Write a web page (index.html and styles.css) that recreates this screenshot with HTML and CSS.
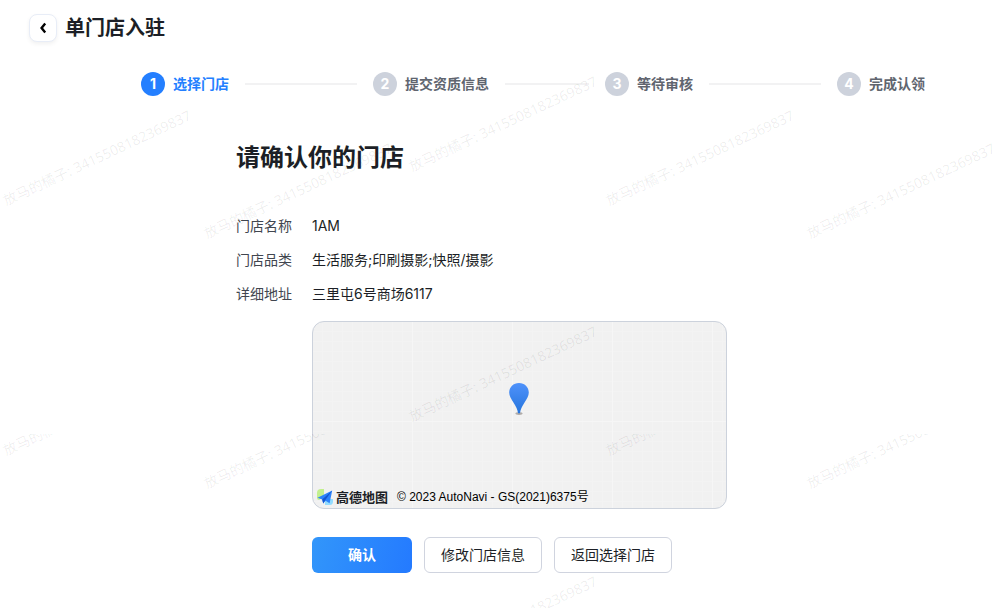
FILE: index.html
```html
<!DOCTYPE html>
<html lang="zh-CN">
<head>
<meta charset="utf-8">
<meta name="viewport" content="width=device-width, initial-scale=1">
<title>单门店入驻</title>
<link rel="stylesheet" href="styles.css">
</head>
<body>
<header class="header">
  <button class="back" type="button" aria-label="返回">
    <svg width="14" height="14" viewBox="0 0 14 14"><path d="M9.200 2.600 5.600 7l3.600 4.400" fill="none" stroke="#000" stroke-width="2.400"/></svg>
  </button>
  <h1 class="title">单门店入驻</h1>
</header>

<ol class="steps">
  <li class="step step-active"><span class="step-num">1</span><span class="step-name">选择门店</span></li>
  <li class="step"><span class="step-num">2</span><span class="step-name">提交资质信息</span></li>
  <li class="step"><span class="step-num">3</span><span class="step-name">等待审核</span></li>
  <li class="step"><span class="step-num">4</span><span class="step-name">完成认领</span></li>
</ol>

<main class="content">
  <h2 class="heading">请确认你的门店</h2>
  <dl class="info">
    <dt>门店名称</dt><dd>1AM</dd>
    <dt>门店品类</dt><dd>生活服务;印刷摄影;快照/摄影</dd>
    <dt>详细地址</dt><dd>三里屯6号商场6117</dd>
  </dl>
  <div class="detail">
    <div class="map">
      <svg class="pin" width="22" height="34" viewBox="0 0 22 34">
        <defs><linearGradient id="pin-fill" x1="0" y1="0" x2="0" y2="1"><stop offset="0" stop-color="#4f92fb"/><stop offset="1" stop-color="#2675dd"/></linearGradient></defs>
        <ellipse cx="10" cy="31.6" rx="3.6" ry="1.4" fill="#8d8581" opacity=".65"/>
        <path d="M10 1C4.400 1 .2 5.200.2 10.600c0 3.600 2 6.400 4.400 10.200C7 24.600 8.600 27.400 9 31.200h2c.4-3.800 2-6.600 4.400-10.400 2.400-3.800 4.400-6.600 4.400-10.200C19.800 5.200 15.600 1 10 1z" fill="url(#pin-fill)"/>
      </svg>
      <div class="credit">
        <svg class="credit-logo" width="18" height="18" viewBox="0 0 18 18">
          <path d="M1 5a4 4 0 0 1 4-4h3v8L3 12a2 2 0 0 1-2-2z" fill="#c3f08e"/>
          <path d="M9 11h8v2.500a3.500 3.500 0 0 1-3.500 3.500H9z" fill="#93dcff"/>
          <path d="M1.500 9.800 16.200 2.500 13.600 15.200 9.500 12.800 7.200 15.600 6.200 11.400z" fill="#2c83fb"/>
          <path d="M16.200 2.500 6.200 11.400 7.200 15.600 9 12.400z" fill="#1556d0"/>
        </svg>
        <span class="credit-brand">高德地图</span>
        <span class="credit-text">© 2023 AutoNavi - GS(2021)6375号</span>
      </div>
    </div>
    <div class="actions">
      <button class="btn btn-primary" type="button">确认</button>
      <button class="btn" type="button">修改门店信息</button>
      <button class="btn" type="button">返回选择门店</button>
    </div>
  </div>
</main>

<svg class="watermark" aria-hidden="true">
  <defs>
    <clipPath id="lower"><rect x="0" y="434" width="100%" height="100%"/></clipPath>
  </defs>
  <g>
    <text transform="translate(6 206) rotate(-25)">放马的橘子: 3415508182369837</text>
    <text transform="translate(207 239) rotate(-25)">放马的橘子: 3415508182369837</text>
    <text transform="translate(412 172) rotate(-25)">放马的橘子: 3415508182369837</text>
    <text transform="translate(609 206) rotate(-25)">放马的橘子: 3415508182369837</text>
    <text transform="translate(810 239) rotate(-25)">放马的橘子: 3415508182369837</text>
    <text transform="translate(412 422) rotate(-25)">放马的橘子: 3415508182369837</text>
    <text transform="translate(412 672) rotate(-25)">放马的橘子: 3415508182369837</text>
  </g>
  <g clip-path="url(#lower)">
    <text transform="translate(6 456) rotate(-25)">放马的橘子: 3415508182369837</text>
    <text transform="translate(207 489) rotate(-25)">放马的橘子: 3415508182369837</text>
    <text transform="translate(609 456) rotate(-25)">放马的橘子: 3415508182369837</text>
    <text transform="translate(810 489) rotate(-25)">放马的橘子: 3415508182369837</text>
  </g>
</svg>
</body>
</html>
```
FILE: styles.css
```css
* {
  box-sizing: border-box;
}

body {
  position: relative;
  min-height: 100vh;
  margin: 0;
  background: #fff;
  color: #1c1f26;
  font: 14px/22px Inter, "Noto Sans CJK SC", sans-serif;
}

h1, h2, ol, dl, dd {
  margin: 0;
  padding: 0;
}

.header {
  display: flex;
  align-items: center;
  gap: 8px;
  padding: 14px 29px 0;
}

.back {
  display: flex;
  align-items: center;
  justify-content: center;
  width: 28px;
  height: 28px;
  padding: 0;
  border: 1px solid #e8edf7;
  border-radius: 8px;
  background: #fff;
  box-shadow: 0 2px 4px rgba(0, 0, 0, 0.06);
}

.title {
  font-size: 20px;
  line-height: 28px;
  font-weight: 600;
}

.steps {
  display: flex;
  margin-top: 30px;
  padding: 0 80px 0 141px;
  list-style: none;
}

.step {
  display: flex;
  flex: 1;
  align-items: center;
  gap: 8px;
  color: #60656f;
  font-weight: 600;
  line-height: 24px;
  white-space: nowrap;
}

.step:last-child {
  flex: none;
}

.step:not(:last-child)::after {
  content: "";
  flex: 1;
  height: 2px;
  margin: 0 16px 0 8px;
  background: #f2f2f3;
}

.step-num {
  width: 24px;
  height: 24px;
  border-radius: 50%;
  background: #cdd2dc;
  color: #fff;
  font-weight: 700;
  text-align: center;
}

.step-active {
  color: #247fff;
}

.step-active .step-num {
  background: #247fff;
}

.content {
  padding: 46px 278px 36px 236px;
}

.heading {
  font-size: 24px;
  line-height: 32px;
  font-weight: 600;
}

.info {
  display: grid;
  grid-template-columns: 56px 1fr;
  gap: 12px 20px;
  margin-top: 41px;
}

.info dt {
  color: #41464f;
}

.detail {
  margin: 16px 0 0 76px;
}

.map {
  display: flex;
  flex-direction: column;
  height: 188px;
  border: 1px solid #ccd2dc;
  border-radius: 12px;
  background-color: #f1f1f1;
  background-image:
    linear-gradient(to right, #f6f6f6 1px, transparent 1px),
    linear-gradient(to bottom, #f6f6f6 1px, transparent 1px),
    linear-gradient(to right, #f3f3f3 1px, transparent 1px),
    linear-gradient(to bottom, #f3f3f3 1px, transparent 1px);
  background-size: 100px 100px, 100px 100px, 10px 10px, 10px 10px;
  background-position: -1px -1px;
}

.pin {
  margin: 60px auto 0;
}

.credit {
  display: flex;
  align-items: center;
  margin-top: auto;
  padding: 0 0 2px 3px;
  line-height: 18px;
}

.credit-brand {
  margin-left: 2px;
  font: 700 13px/18px "Noto Sans CJK SC", sans-serif;
}

.credit-text {
  margin-left: 9px;
  color: #000;
  font: 12px/18px "Liberation Sans", "Noto Sans CJK SC", sans-serif;
}

.actions {
  display: flex;
  gap: 12px;
  margin-top: 28px;
}

.btn {
  height: 36px;
  padding: 0 16px;
  border: 1px solid #d0d4df;
  border-radius: 6px;
  background: #fff;
  color: inherit;
  font: inherit;
  white-space: nowrap;
}

.btn-primary {
  width: 100px;
  border: 0;
  background: linear-gradient(105deg, #3296fa, #247aff);
  color: #fff;
  font-weight: 600;
}

.watermark {
  position: absolute;
  inset: 0;
  width: 100%;
  height: 100%;
  overflow: hidden;
  pointer-events: none;
  fill: rgba(0, 0, 0, 0.07);
  font: 14px "Noto Sans", "Noto Sans CJK SC", sans-serif;
}
```
